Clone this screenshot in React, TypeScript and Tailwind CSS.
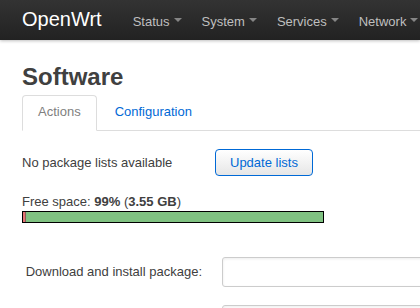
import React from 'react';

const menus = ['Status', 'System', 'Services', 'Network'];

const Caret: React.FC = () => (
  <span className="ml-[4px] mb-[4px] inline-block h-0 w-0 border-x-[4px] border-t-[4px] border-x-transparent border-t-[#858585] align-baseline" />
);

const App: React.FC = () => {
  return (
    <div
      className="h-screen w-full overflow-hidden bg-white text-[13px] leading-[18px] text-[#404040]"
      style={{ fontFamily: '"Liberation Sans", Arial, Helvetica, sans-serif' }}
    >
      <nav className="relative z-10 h-10 overflow-hidden whitespace-nowrap bg-gradient-to-b from-[#333333] to-[#222222] shadow-[0_1px_3px_rgba(0,0,0,0.25)]">
        <div className="flex items-baseline pl-[22px] pt-[9px]">
          <span className="pr-[21px] text-[20px] leading-[20px] text-white">OpenWrt</span>
          {menus.map((m) => (
            <span key={m} className="px-[10px] text-[13px] leading-[18px] text-[#bfbfbf]">
              {m}
              <Caret />
            </span>
          ))}
        </div>
      </nav>

      <main className="px-[22px]">
        <h2 className="mt-[19px] text-[24px] font-bold leading-[36px] text-[#404040]">Software</h2>

        <ul className="-mr-[22px] flex border-b border-[#dddddd]">
          <li className="-mb-px mr-[2px] rounded-t-[4px] border border-[#dddddd] border-b-white bg-white px-[15px] pb-[9px] pt-[7px] text-[#808080]">
            Actions
          </li>
          <li className="-mb-px border border-transparent px-[15px] pb-[9px] pt-[7px] text-[#0069d6]">
            Configuration
          </li>
        </ul>

        <div className="mt-[18px] flex items-center">
          <span className="w-[193px]">No package lists available</span>
          <button className="h-[27px] rounded-[4px] border border-[#0069d6] bg-gradient-to-b from-white to-[#e6e6e6] px-[14px] text-[13px] leading-[18px] text-[#0069d6]">
            Update lists
          </button>
        </div>

        <div className="mt-[17px]">
          <div>
            Free space: <strong>99%</strong> (<strong>3.55 GB</strong>)
          </div>
          <div className="flex h-[12px] w-[302px] border border-black">
            <div className="w-[3px] border-r border-[#8a5a5a] bg-[#e57373]" />
            <div className="flex-1 bg-[#80c282]" />
          </div>
        </div>

        <div className="mt-[34px] flex items-center">
          <label className="w-[180px] shrink-0 text-right">Download and install package:</label>
          <input
            type="text"
            className="ml-[20px] h-[30px] w-[260px] shrink-0 rounded-[3px] border border-[#cccccc] shadow-[inset_0_1px_3px_rgba(0,0,0,0.08)]"
          />
        </div>

        <div className="mt-[18px] flex items-center">
          <span className="w-[180px] shrink-0" />
          <input
            type="text"
            className="ml-[20px] h-[30px] w-[260px] shrink-0 rounded-[3px] border border-[#cccccc] shadow-[inset_0_1px_3px_rgba(0,0,0,0.08)]"
          />
        </div>
      </main>
    </div>
  );
};

export default App;
